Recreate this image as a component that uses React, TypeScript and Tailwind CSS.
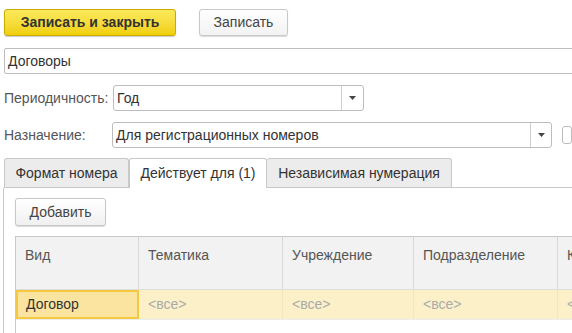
import React from "react";

const Arrow = () => (
  <svg width="7" height="4" viewBox="0 0 7 4"><path d="M0 0h7L3.5 4z" fill="#444" /></svg>
);

export default function App() {
  const cols = [
    { t: "Вид", w: 123 },
    { t: "Тематика", w: 144 },
    { t: "Учреждение", w: 131 },
    { t: "Подразделение", w: 144 },
    { t: "Корреспондент", w: 140 },
  ];
  return (
    <div
      className="w-[572px] h-[333px] overflow-hidden bg-white text-[14px] text-[#333]"
      style={{ fontFamily: '"Liberation Sans", Arial, sans-serif' }}
    >
      <div className="flex items-center pt-[9px] pl-[4px] gap-[23px]">
        <button className="w-[172px] h-[27px] rounded-[3px] border border-[#c9ab00] bg-gradient-to-b from-[#fdea5a] to-[#f0cf00] font-bold text-[#333] shadow-[0_1px_1px_rgba(0,0,0,0.2)]">
          Записать и закрыть
        </button>
        <button className="w-[89px] h-[27px] rounded-[3px] border border-[#c8c8c8] bg-gradient-to-b from-white to-[#f2f2f2] text-[#444] shadow-[0_1px_1px_rgba(0,0,0,0.15)]">
          Записать
        </button>
      </div>
      <div className="mt-[12px] ml-[4px] w-[600px] h-[26px] border border-[#bdbdbd] rounded-[2px] flex items-center pl-[3px] text-[#333]">
        Договоры
      </div>
      <div className="flex items-center mt-[11px] h-[26px]">
        <div className="w-[113px] pl-[4px] text-[#555]">Периодичность:</div>
        <div className="w-[251px] h-[26px] border border-[#bdbdbd] rounded-[3px] flex">
          <div className="flex-1 flex items-center pl-[3px]">Год</div>
          <div className="w-[22px] border-l border-[#cfcfcf] flex items-center justify-center"><Arrow /></div>
        </div>
      </div>
      <div className="flex items-center mt-[11px] h-[26px]">
        <div className="w-[113px] pl-[4px] text-[#555]">Назначение:</div>
        <div className="w-[444px] h-[26px] border border-[#bdbdbd] rounded-[3px] flex">
          <div className="flex-1 flex items-center pl-[3px]">Для регистрационных номеров</div>
          <div className="w-[21px] border-l border-[#cfcfcf] flex items-center justify-center"><Arrow /></div>
        </div>
        <div className="ml-[10px] w-[10px] h-[18px] border border-[#bdbdbd] rounded-[3px]" />
      </div>
      <div className="mt-[10px] ml-[4px] flex items-end h-[30px] border-b border-[#c8c8c8] w-[600px]">
        <div className="w-[125px] h-[29px] border border-b-0 border-[#c8c8c8] bg-[#ececec] rounded-t-[3px] flex items-center justify-center text-[#333] mb-[0px]">
          Формат номера
        </div>
        <div className="w-[138px] h-[30px] -mb-px border border-b-0 border-[#c8c8c8] bg-white rounded-t-[3px] flex items-center justify-center text-[#333] relative">
          Действует для (1)
        </div>
        <div className="w-[185px] h-[29px] border border-b-0 border-l-0 border-[#c8c8c8] bg-[#ececec] rounded-t-[3px] flex items-center justify-center text-[#333]">
          Независимая нумерация
        </div>
      </div>
      <div className="ml-[3px] border-l border-[#c8c8c8] h-[200px] pl-[11px]">
        <button className="mt-[10px] w-[91px] h-[28px] rounded-[3px] border border-[#c8c8c8] bg-gradient-to-b from-white to-[#f0f0f0] text-[#444] shadow-[0_1px_1px_rgba(0,0,0,0.15)]">
          Добавить
        </button>
        <div className="mt-[10px] border-l border-t border-[#c8c8c8] w-[700px] h-[120px]">
          <div className="flex h-[53px] bg-[#f2f2f2] border-b border-[#dcdcdc]">
            {cols.map((c, i) => (
              <div
                key={i}
                className="shrink-0 border-r border-[#d8d8d8] pl-[9px] pt-[8px] text-[#555]"
                style={{ width: c.w }}
              >
                {c.t}
              </div>
            ))}
          </div>
          <div className="flex h-[30px] bg-[#fcf0c8] border-b border-[#ececec]">
            {cols.map((c, i) => (
              <div
                key={i}
                className={
                  i === 0
                    ? "shrink-0 bg-[#fbe3a0] border-2 border-[#f5c842] flex items-center pl-[8px] text-[#333]"
                    : "shrink-0 border-r border-[#f3e6bb] flex items-center pl-[9px] text-[#aaa]"
                }
                style={{ width: c.w }}
              >
                {i === 0 ? "Договор" : "<все>"}
              </div>
            ))}
          </div>
        </div>
      </div>
    </div>
  );
}
